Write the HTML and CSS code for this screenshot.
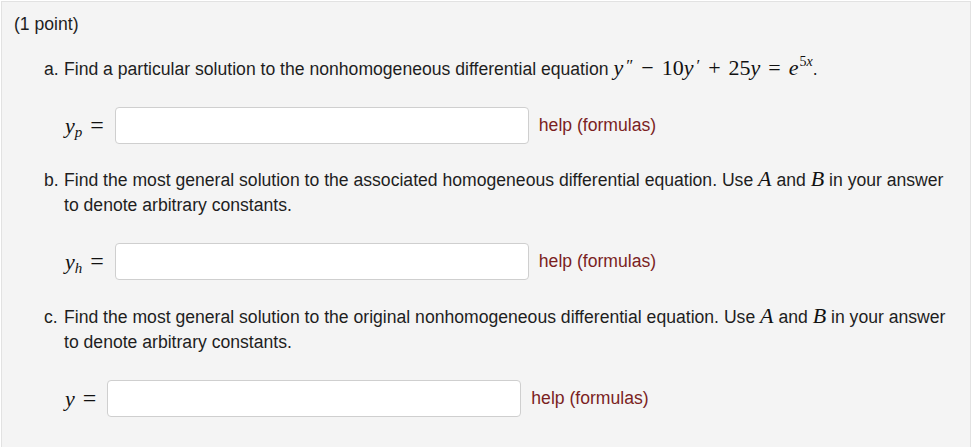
FILE: index.html
```html
<!DOCTYPE html>
<html>
<head>
<meta charset="utf-8">
<link rel="stylesheet" href="styles.css">
</head>
<body>
<div class="frame">
  <div class="problem">
    <p class="points">(1 point)</p>
    <div class="part">
      <span class="marker">a.</span>
      <div class="body">
        <p class="text">Find a particular solution to the nonhomogeneous differential equation <span class="m"><i>y</i><span class="pr">″</span><span class="op">−</span>10<i>y</i><span class="pr">′</span><span class="op">+</span>25<i>y</i><span class="op">=</span><i>e</i><sup>5<i>x</i></sup></span>.</p>
        <div class="answer">
          <span class="label m"><i>y</i><sub><i>p</i></sub><span class="eq">=</span></span>
          <input class="field" type="text">
          <a class="help">help (formulas)</a>
        </div>
      </div>
    </div>
    <div class="part">
      <span class="marker">b.</span>
      <div class="body">
        <p class="text">Find the most general solution to the associated homogeneous differential equation. Use <span class="m"><i>A</i></span> and <span class="m"><i>B</i></span> in your answer to denote arbitrary constants.</p>
        <div class="answer">
          <span class="label m"><i>y</i><sub><i>h</i></sub><span class="eq">=</span></span>
          <input class="field" type="text">
          <a class="help">help (formulas)</a>
        </div>
      </div>
    </div>
    <div class="part part-last">
      <span class="marker">c.</span>
      <div class="body">
        <p class="text">Find the most general solution to the original nonhomogeneous differential equation. Use <span class="m"><i>A</i></span> and <span class="m"><i>B</i></span> in your answer to denote arbitrary constants.</p>
        <div class="answer">
          <span class="label m"><i>y</i><span class="eq">=</span></span>
          <input class="field" type="text">
          <a class="help">help (formulas)</a>
        </div>
      </div>
    </div>
  </div>
</div>
</body>
</html>
```
FILE: styles.css
```css
html, body {
  margin: 0;
  padding: 0;
  background: #ffffff;
}
body {
  font-family: "Liberation Sans", Arial, sans-serif;
  font-size: 17.6px;
  color: #1e1e1e;
}
.frame {
  padding: 1px 2px 0 1px;
}
.problem {
  background: #f4f4f4;
  border: 1px solid #e2e2e2;
  border-bottom: none;
  min-height: 460px;
  padding: 10px 0 0 12px;
  box-sizing: border-box;
}
.points {
  margin: 0;
  line-height: 25px;
}
.part {
  display: grid;
  grid-template-columns: 20px 1fr;
  margin: 20px 0 0 30px;
}
.part + .part {
  margin-top: 25px;
}
.part-last {
  margin-top: 26px !important;
}
.marker {
  line-height: 25px;
}
.body {
  display: flex;
  flex-direction: column;
}
.text {
  margin: 0;
  line-height: 25px;
  padding-right: 18px;
}
.m {
  font-family: "Liberation Serif", "Times New Roman", serif;
  font-size: 22px;
  line-height: 1;
  color: #111;
}
.m i {
  font-style: italic;
}
.pr {
  font-style: normal;
  font-size: 17px;
  margin-left: 3px;
  position: relative;
  top: -4px;
}
.op {
  margin: 0 8px;
}
.m sup {
  font-size: 14px;
  vertical-align: 9px;
  line-height: 0;
  margin-left: 1px;
}
.m sub {
  font-size: 15px;
  vertical-align: -4px;
  line-height: 0;
}
.answer {
  display: flex;
  align-items: center;
  margin-top: 25px;
  height: 36px;
}
.label {
  margin-left: 1px;
  margin-right: 11px;
  white-space: nowrap;
}
.eq {
  margin-left: 8px;
  font-size: 24px;
}
.field {
  width: 414px;
  height: 37px;
  box-sizing: border-box;
  border: 1px solid #cfcfcf;
  border-radius: 4px;
  background: #ffffff;
  margin: 0;
  padding: 4px 8px;
}
.help {
  margin-left: 10px;
  color: #7b1f1f;
  text-decoration: none;
}
```
